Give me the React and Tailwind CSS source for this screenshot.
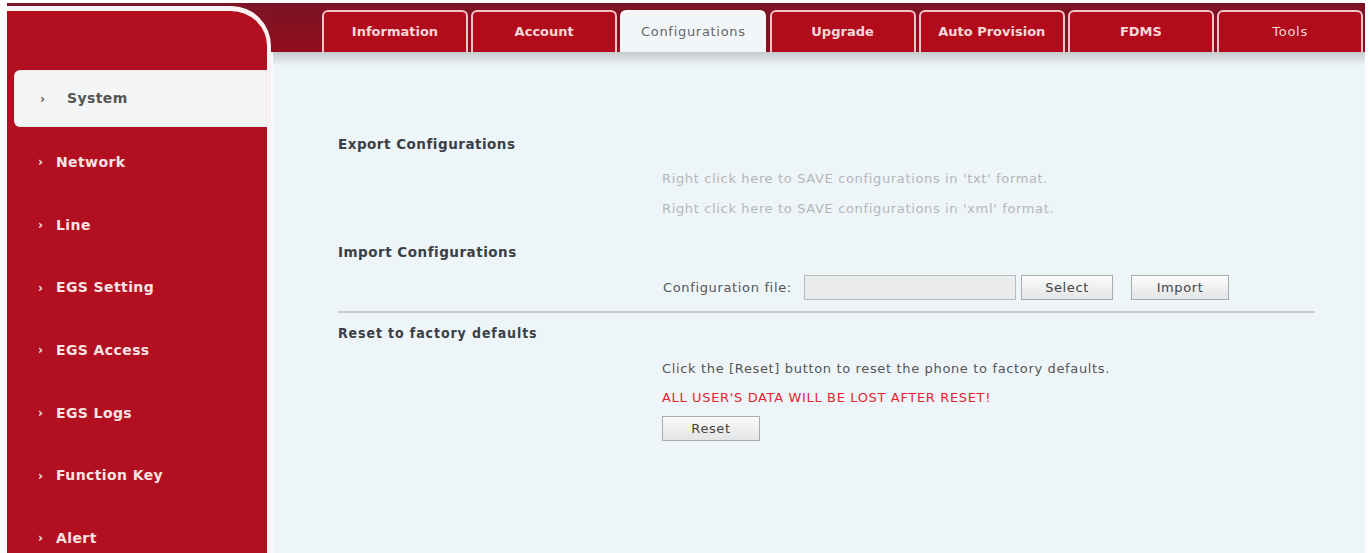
const tabs = [
  { label: 'Information', bold: true },
  { label: 'Account', bold: true },
  { label: 'Configurations', active: true },
  { label: 'Upgrade', bold: true },
  { label: 'Auto Provision', bold: true },
  { label: 'FDMS', bold: true },
  { label: 'Tools' },
]

const menu = ['Network', 'Line', 'EGS Setting', 'EGS Access', 'EGS Logs', 'Function Key', 'Alert']

const Btn = ({ children, className = '' }) => (
  <button
    type="button"
    className={`h-[25px] border border-[#a9abad] bg-[linear-gradient(to_bottom,#fbfbfb,#e3e4e5)] text-[13px] tracking-[0.6px] text-[#444] ${className}`}
  >
    {children}
  </button>
)

const App = () => {
  return (
    <div className="w-[1371px] h-[553px] bg-white pt-[3px] pl-[7px] pr-[6px] flex overflow-hidden font-['DejaVu_Sans',sans-serif]">
      {/* left menu */}
      <aside className="w-[264px] shrink-0 flex flex-col pb-[2px] bg-[linear-gradient(to_bottom,#7c1426_0,#8e0f1f_49px,#fff_49px)]">
        <div className="mt-[3px] flex-1 bg-[#b20f20] border-t-[5px] border-r-[4px] border-[#fbf3f3] rounded-tr-[40px] pt-[59px]">
          <div className="ml-[7px] h-[57px] bg-[#f3f5f6] rounded-l-[6px] flex items-center pl-[26px] shadow-[inset_0_0_2px_rgba(0,0,0,0.15)]">
            <span className="w-[27px] text-[12px] font-bold text-[#555]">›</span>
            <span className="text-[14px] font-bold tracking-[0.4px] text-[#555]">System</span>
          </div>
          <ul className="mt-[4px]">
            {menu.map(item => (
              <li key={item} className="h-[62.7px] flex items-center pl-[31px] text-[#f8e3e3]">
                <span className="w-[18px] text-[12px] font-bold">›</span>
                <span className="text-[14px] font-bold tracking-[0.4px]">{item}</span>
              </li>
            ))}
          </ul>
        </div>
      </aside>

      {/* main */}
      <main className="flex-1 flex flex-col">
        <nav className="h-[49px] shrink-0 pt-[7px] pl-[51px] flex gap-[3.2px] bg-[linear-gradient(to_bottom,#7a1324,#930d1d)]">
          {tabs.map(tab => (
            <div
              key={tab.label}
              className={`w-[146px] h-[42px] rounded-t-[6px] border-2 border-b-0 flex items-center justify-center text-[13px] ${
                tab.active
                  ? 'bg-[#f2f6f8] border-[#f7f7f7] text-[#666]'
                  : 'bg-[#b20b1b] border-[#efc4c6] text-[#f6d8d8]'
              } ${tab.bold ? 'font-bold' : 'tracking-[0.7px]'}`}
            >
              {tab.label}
            </div>
          ))}
        </nav>

        <section className="flex-1 bg-[#eef5f8] border-l-[2px] border-[#f8fbfc] text-[13px] tracking-[0.65px]">
          <div className="h-[14px] bg-[linear-gradient(to_bottom,#c5cacd,#eef5f8)]" />
          <div className="pl-[65px]">
            <h3 className="mt-[69px] h-[18px] leading-[18px] text-[13.5px] font-bold tracking-[0.5px] text-[#3b4046]">
              Export Configurations
            </h3>
            <div className="ml-[324px] text-[#b3b7ba] leading-[18px]">
              <p className="mt-[17px] h-[18px]">Right click here to SAVE configurations in 'txt' format.</p>
              <p className="mt-[12px] h-[18px]">Right click here to SAVE configurations in 'xml' format.</p>
            </div>

            <h3 className="mt-[25px] h-[18px] leading-[18px] text-[13.5px] font-bold tracking-[0.5px] text-[#3b4046]">
              Import Configurations
            </h3>
            <div className="ml-[325px] mt-[14px] h-[25px] flex items-center">
              <span className="w-[141px] text-[#555]">Configuration file:</span>
              <div className="w-[212px] h-[25px] border border-[#b8babc] bg-[#eaebeb]" />
              <Btn className="ml-[5px] w-[92px]">Select</Btn>
              <Btn className="ml-[18px] w-[98px]">Import</Btn>
            </div>

            <div className="mt-[11px] w-[977px] h-[2px] bg-[#c9cdd0]" />

            <h3 className="mt-[11px] h-[18px] leading-[18px] font-['DejaVu_Sans_Condensed','DejaVu_Sans',sans-serif] text-[14px] font-bold tracking-[0.9px] text-[#3b4046]">
              Reset to factory defaults
            </h3>
            <div className="ml-[324px] leading-[18px]">
              <p className="mt-[18px] h-[18px] text-[#555]">Click the [Reset] button to reset the phone to factory defaults.</p>
              <p className="mt-[11px] h-[18px] text-[#e3262e]">ALL USER'S DATA WILL BE LOST AFTER RESET!</p>
              <Btn className="mt-[9px] w-[98px]">Reset</Btn>
            </div>
          </div>
        </section>
      </main>
    </div>
  )
}

export default App
